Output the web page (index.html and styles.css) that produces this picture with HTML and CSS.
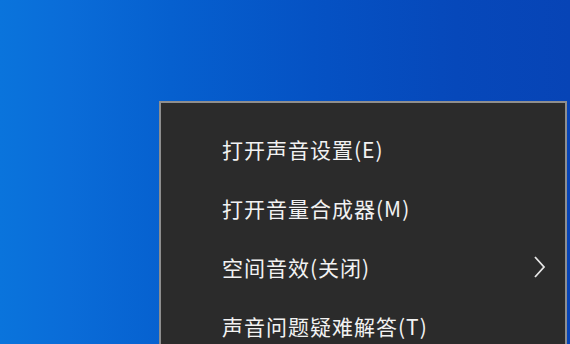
FILE: index.html
```html
<!DOCTYPE html>
<html lang="zh-CN">
<head>
<meta charset="utf-8">
<link rel="stylesheet" href="styles.css">
</head>
<body>
<div class="desktop">
  <div class="menu">
    <div class="item">打开声音设置(E)</div>
    <div class="item">打开音量合成器(M)</div>
    <div class="item has-sub">空间音效(关闭)
      <svg class="chev" width="13" height="24" viewBox="0 0 13 24"><path d="M2 2 L11 12 L2 22" fill="none" stroke="#e6e6e6" stroke-width="1.8"/></svg>
    </div>
    <div class="item">声音问题疑难解答(T)</div>
  </div>
</div>
</body>
</html>
```
FILE: styles.css
```css
html, body {
  margin: 0;
  padding: 0;
  width: 570px;
  height: 344px;
  overflow: hidden;
}
.desktop {
  position: relative;
  width: 570px;
  height: 344px;
  overflow: hidden;
  background: linear-gradient(90deg, #0a74dc 0%, #0a6cd8 12%, #0660cf 30%, #0552c4 55%, #0648ba 80%, #0744b6 100%);
}
.menu {
  position: absolute;
  left: 159px;
  top: 101px;
  right: 3px;
  bottom: 0;
  overflow: hidden;
  background: #2b2b2b;
  border: 2px solid #8e8e8e;
  border-bottom: none;
  padding-top: 16px;
}
.item {
  flex: none;
  height: 59px;
  display: flex;
  align-items: center;
  padding-left: 61px;
  padding-right: 19px;
  font-family: "Noto Sans CJK SC", "Microsoft YaHei", sans-serif;
  font-size: 21px;
  color: #f2f2f2;
  letter-spacing: 1px;
}
.has-sub {
  justify-content: space-between;
}
.chev {
  display: block;
}
```
